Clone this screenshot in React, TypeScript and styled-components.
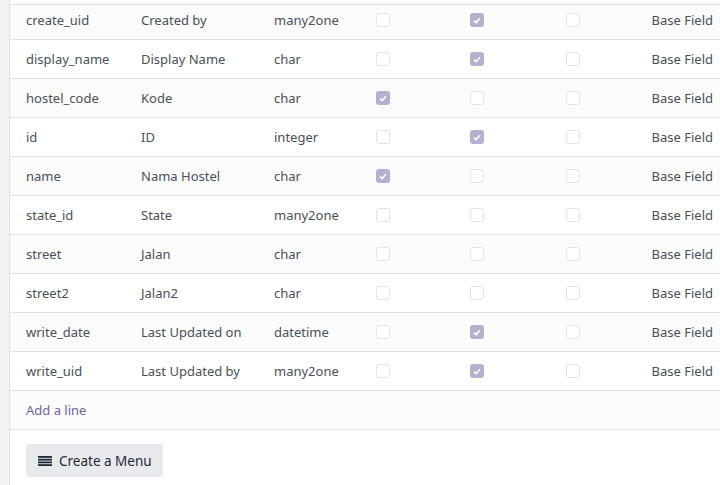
import React from "react";
import styled, { createGlobalStyle } from "styled-components";

type Field = {
  name: string;
  label: string;
  type: string;
  required: boolean;
  readonly: boolean;
  indexed: boolean;
};

const fields: Field[] = [
  { name: "create_uid", label: "Created by", type: "many2one", required: false, readonly: true, indexed: false },
  { name: "display_name", label: "Display Name", type: "char", required: false, readonly: true, indexed: false },
  { name: "hostel_code", label: "Kode", type: "char", required: true, readonly: false, indexed: false },
  { name: "id", label: "ID", type: "integer", required: false, readonly: true, indexed: false },
  { name: "name", label: "Nama Hostel", type: "char", required: true, readonly: false, indexed: false },
  { name: "state_id", label: "State", type: "many2one", required: false, readonly: false, indexed: false },
  { name: "street", label: "Jalan", type: "char", required: false, readonly: false, indexed: false },
  { name: "street2", label: "Jalan2", type: "char", required: false, readonly: false, indexed: false },
  { name: "write_date", label: "Last Updated on", type: "datetime", required: false, readonly: true, indexed: false },
  { name: "write_uid", label: "Last Updated by", type: "many2one", required: false, readonly: true, indexed: false },
];

const GlobalStyle = createGlobalStyle`
  html, body {
    margin: 0;
    padding: 0;
    background: #ffffff;
    font-family: "Noto Sans", "Open Sans", sans-serif;
    font-size: 13px;
    color: #495057;
    overflow: hidden;
  }
`;

const Page = styled.div`
  display: flex;
  width: 720px;
  height: 485px;
`;

const Gutter = styled.div`
  width: 9px;
  flex: none;
  background: #f2f3f5;
  border-right: 1px solid #dee2e6;
`;

const Sheet = styled.div`
  flex: 1;
  min-width: 0;
  position: relative;
  padding-top: 1px;
  background: #fff;

  &::before {
    content: "";
    position: absolute;
    left: 0;
    right: 0;
    top: 4px;
    height: 1px;
    background: #dee2e6;
  }
`;

const Row = styled.div<{ $striped: boolean }>`
  display: grid;
  grid-template-columns: 115px 133px 102px 94px 96px 80px 1fr;
  align-items: center;
  height: 38px;
  border-bottom: 1px solid #dee2e6;
  background: ${(p) => (p.$striped ? "#fbfbfc" : "#ffffff")};
`;

const Cell = styled.div<{ $right?: boolean }>`
  padding: ${(p) => (p.$right ? "0 7px 0 0" : "0 0 0 16px")};
  white-space: nowrap;
  display: flex;
  justify-content: ${(p) => (p.$right ? "flex-end" : "flex-start")};
  align-items: center;
`;

const Box = styled.span<{ $checked: boolean }>`
  width: 14px;
  height: 14px;
  box-sizing: border-box;
  border-radius: 3px;
  border: 1px solid ${(p) => (p.$checked ? "transparent" : "#e2e4e8")};
  background: ${(p) => (p.$checked ? "#b6afcf" : "#ffffff")};
  display: flex;
  align-items: center;
  justify-content: center;
`;

const AddLine = styled.div`
  height: 38px;
  border-bottom: 1px solid #dee2e6;
  background: #fbfbfc;
  display: flex;
  align-items: center;
  padding-left: 16px;
  color: #71639e;
`;

const Footer = styled.div`
  padding: 14px 16px;
`;

const MenuButton = styled.button`
  display: inline-flex;
  align-items: center;
  gap: 7px;
  height: 33px;
  padding: 0 11px 0 12px;
  border: none;
  border-radius: 4px;
  background: #e7e9ed;
  color: #1f2937;
  font-family: inherit;
  font-size: 13.5px;
`;

const Check: React.FC<{ checked: boolean }> = ({ checked }) => (
  <Box $checked={checked}>
    {checked && (
      <svg width="8" height="7" viewBox="0 0 8 7">
        <path d="M1 3.6 L3.1 5.6 L7 1.3" fill="none" stroke="#fff" strokeWidth="1.7" />
      </svg>
    )}
  </Box>
);

const BarsIcon = () => (
  <svg width="14" height="10" viewBox="0 0 14 10">
    <rect x="0" y="0" width="14" height="1.8" fill="#1f2937" />
    <rect x="0" y="2.75" width="14" height="1.8" fill="#1f2937" />
    <rect x="0" y="5.5" width="14" height="1.8" fill="#1f2937" />
    <rect x="0" y="8.2" width="14" height="1.8" fill="#1f2937" />
  </svg>
);

export default function App() {
  return (
    <Page>
      <GlobalStyle />
      <Gutter />
      <Sheet>
        {fields.map((f, i) => (
          <Row key={f.name} $striped={i % 2 === 0}>
            <Cell>{f.name}</Cell>
            <Cell>{f.label}</Cell>
            <Cell>{f.type}</Cell>
            <Cell><Check checked={f.required} /></Cell>
            <Cell><Check checked={f.readonly} /></Cell>
            <Cell><Check checked={f.indexed} /></Cell>
            <Cell $right>Base Field</Cell>
          </Row>
        ))}
        <AddLine>Add a line</AddLine>
        <Footer>
          <MenuButton>
            <BarsIcon />
            Create a Menu
          </MenuButton>
        </Footer>
      </Sheet>
    </Page>
  );
}
